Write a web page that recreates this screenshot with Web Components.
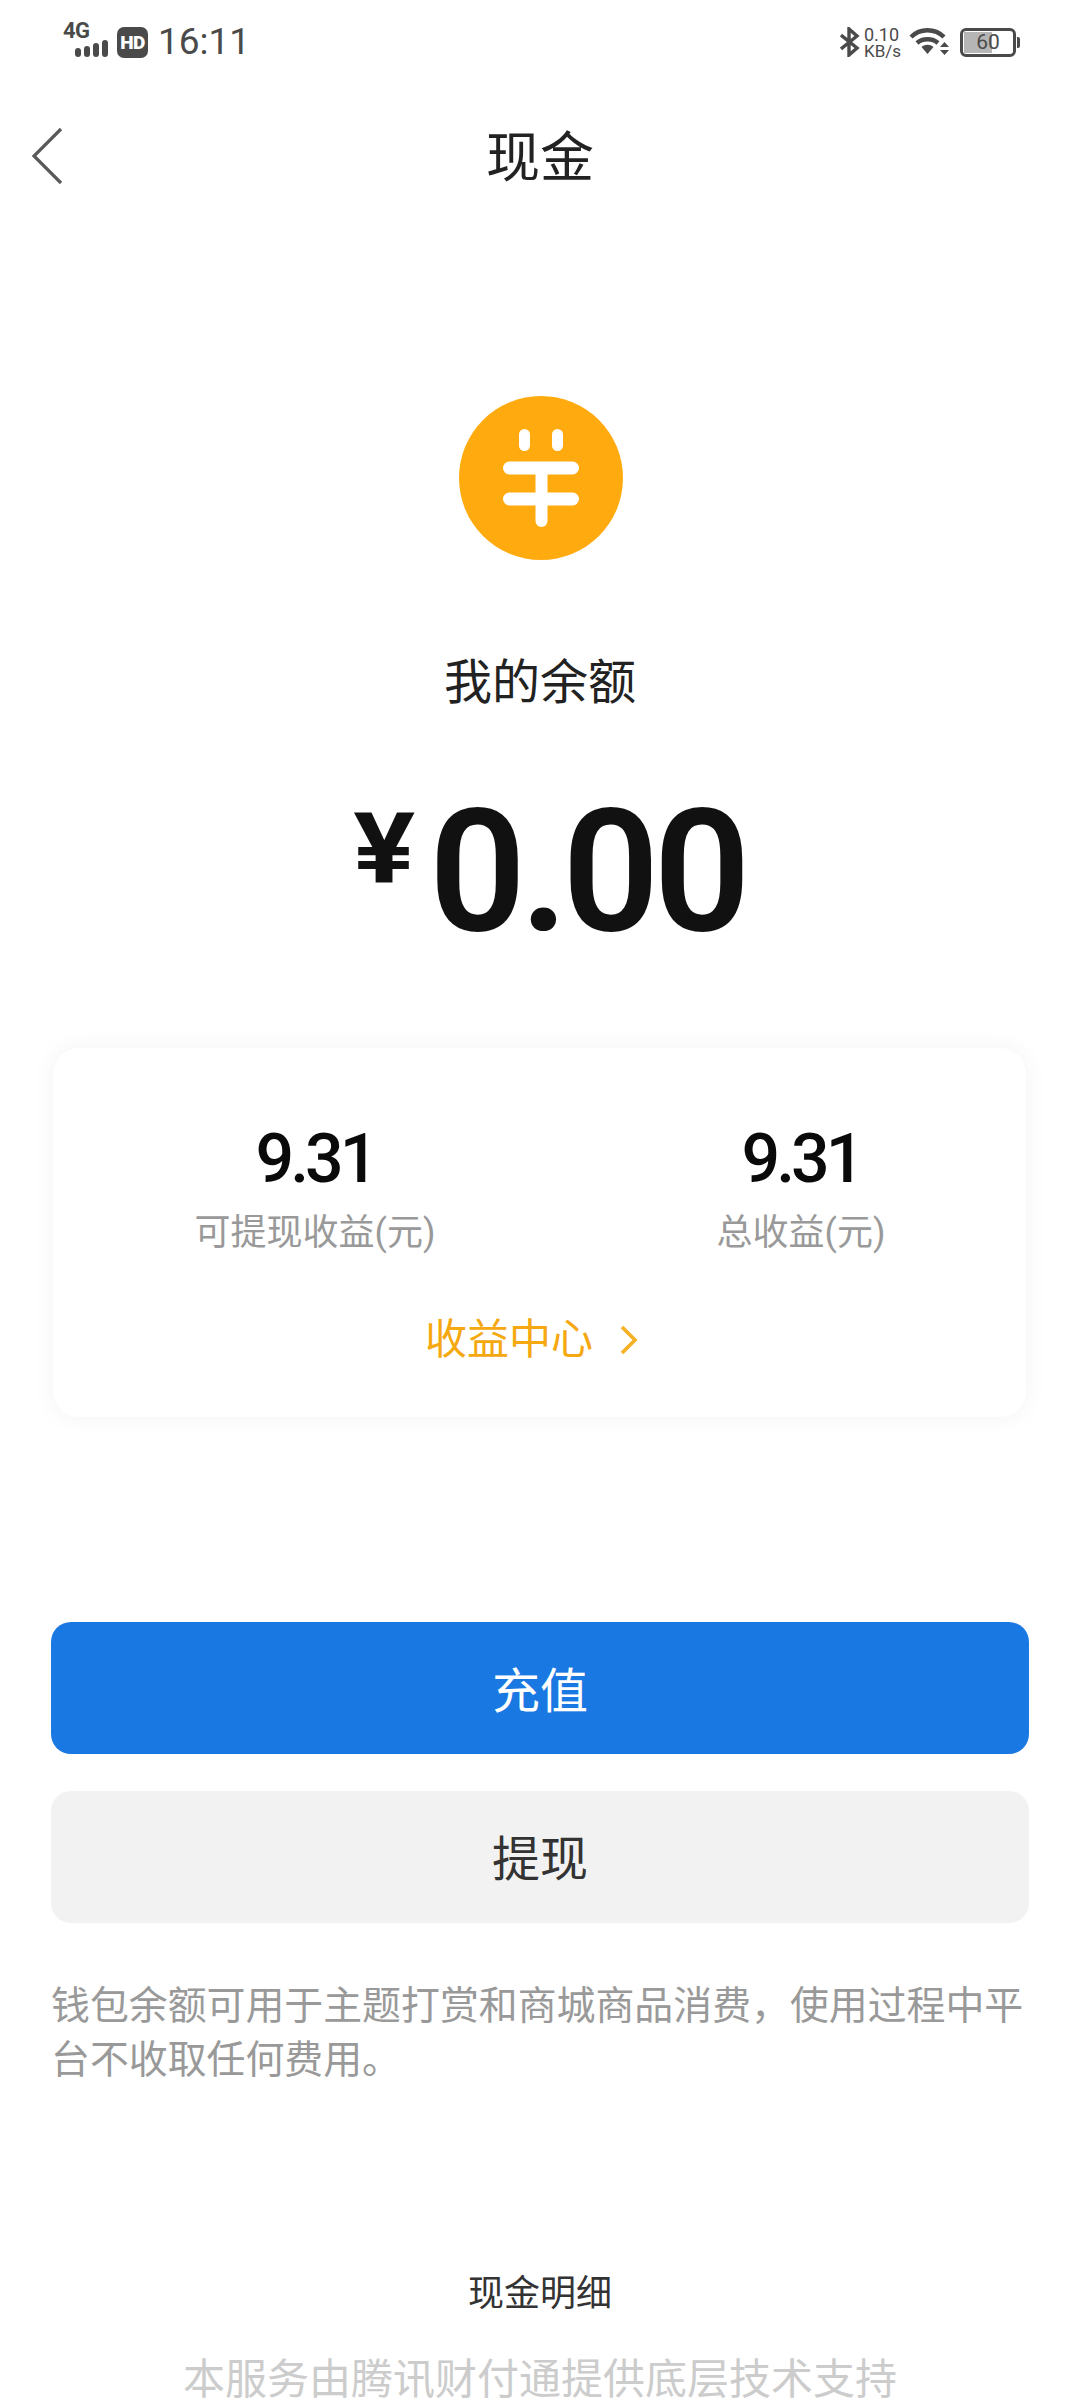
<!DOCTYPE html>
<html lang="zh">
<head>
<meta charset="utf-8">
<title>现金</title>
<style>
  html, body { margin: 0; background: #fff; }
  body {
    width: 1080px;
    height: 2400px;
    overflow: hidden;
    font-family: Roboto, "Noto Sans CJK SC", sans-serif;
  }
</style>
</head>
<body>
<status-bar></status-bar>
<nav-bar>现金</nav-bar>
<balance-head amount="0.00">我的余额</balance-head>
<earnings-card link="收益中心">
  <earn-stat value="9.31">可提现收益(元)</earn-stat>
  <earn-stat value="9.31">总收益(元)</earn-stat>
</earnings-card>
<action-button primary style="margin-top:205px">充值</action-button>
<action-button style="margin-top:37px;padding-bottom:5px">提现</action-button>
<wallet-note>钱包余额可用于主题打赏和商城商品消费，使用过程中平台不收取任何费用。</wallet-note>
<page-footer link="现金明细">本服务由腾讯财付通提供底层技术支持</page-footer>

<script>
class StatusBar extends HTMLElement {
  connectedCallback() {
    this.attachShadow({ mode: 'open' });
    this.shadowRoot.innerHTML = `
      <style>
        :host { display: flex; align-items: center; justify-content: space-between; height: 84px; padding: 0 60px 0 63px; color: #4a4a4a; }
        .side { display: flex; align-items: center; }
        .net { position: relative; width: 48px; height: 34px; }
        .net b { position: absolute; left: 0; top: -4px; font-size: 22px; line-height: 20px; font-weight: 700; letter-spacing: -0.5px; }
        .net svg { position: absolute; left: 11px; top: 14px; }
        .hd { width: 31px; height: 31px; margin-left: 6px; border-radius: 7px; background: #4a4a4a; color: #fff; font-size: 19px; font-weight: 900; line-height: 31px; text-align: center; letter-spacing: -0.5px; }
        .time { margin-left: 10px; font-size: 37px; line-height: 40px; }
        .speed { display: flex; flex-direction: column; align-items: flex-start; margin-left: 4px; width: 45px; padding-top: 2px; }
        .speed span { font-size: 18px; line-height: 16px; }
        .speed small { font-size: 17px; line-height: 16px; }
        .batt { position: relative; width: 56px; height: 29px; margin-left: 11px; box-sizing: border-box; border: 3px solid #4a4a4a; border-radius: 6px; font-size: 21px; line-height: 23px; text-align: center; }
        .batt i { position: absolute; left: 1px; top: 1px; bottom: 1px; width: 28px; background: #b5b5b5; }
        .batt span { position: relative; }
        .nub { width: 3px; height: 11px; margin-left: 1px; border-radius: 0 2px 2px 0; background: #4a4a4a; }
      </style>
      <div class="side">
        <div class="net"><b>4G</b>
          <svg width="36" height="18" viewBox="0 0 36 18" fill="#4a4a4a">
            <rect x="1" y="9" width="6" height="9" rx="3"/><rect x="10" y="7" width="6" height="11" rx="3"/><rect x="19" y="4" width="6" height="14" rx="3"/><rect x="28" y="1" width="6" height="17" rx="3"/>
          </svg>
        </div>
        <div class="hd">HD</div>
        <div class="time">16:11</div>
      </div>
      <div class="side">
        <svg width="20" height="30" viewBox="0 0 20 30" fill="none" stroke="#4a4a4a" stroke-width="3.4"><path d="M1 8 L17 21 L9 28 V2 L17 9 L1 22"/></svg>
        <div class="speed"><span>0.10</span><small>KB/s</small></div>
        <svg width="40" height="30" viewBox="0 0 40 30">
          <g fill="none" stroke="#4a4a4a" stroke-width="4.4">
            <path d="M2 10 C11 1 26 1 35 10"/>
            <path d="M8 16 C13.500 11 23.500 11 29 16"/>
          </g>
          <path d="M12.500 20 C16 17 21 17 24.500 20 L18.500 27 Z" fill="#4a4a4a"/>
          <path d="M35.500 15 L40 20 H31 Z M31 23 H40 L35.500 28 Z" fill="#4a4a4a"/>
        </svg>
        <div class="batt"><i></i><span>60</span></div>
        <div class="nub"></div>
      </div>
    `;
  }
}

class NavBar extends HTMLElement {
  connectedCallback() {
    this.attachShadow({ mode: 'open' });
    this.shadowRoot.innerHTML = `
      <style>
        :host { display: grid; grid-template-columns: 1fr auto 1fr; align-items: center; height: 150px; padding-left: 31px; padding-right: 31px; color: #222; }
        svg { margin-top: -6px; }
        .title { font-size: 54px; line-height: 60px; }
      </style>
      <svg width="32" height="60" viewBox="0 0 32 60" fill="none" stroke="#5a5a5a" stroke-width="3.2"><path d="M30 3 L3 30 L30 57"/></svg>
      <div class="title"><slot></slot></div>
    `;
  }
}

class BalanceHead extends HTMLElement {
  connectedCallback() {
    const amount = this.getAttribute('amount');
    this.attachShadow({ mode: 'open' });
    this.shadowRoot.innerHTML = `
      <style>
        :host { display: flex; flex-direction: column; align-items: center; padding-top: 162px; }
        svg { display: block; margin-left: 2px; }
        .label { margin-top: 93px; font-size: 48px; line-height: 60px; color: #222; }
        .amount { display: flex; align-items: flex-start; height: 170px; margin-top: 74px; margin-bottom: 91px; padding-left: 18px; color: #111; }
        .yen { font-size: 98px; line-height: 98px; font-weight: 700; margin-top: 14px; margin-right: 18px; transform: scaleX(1.18); transform-origin: center; margin-left: 5px; }
        .num { font-size: 170px; line-height: 170px; letter-spacing: -6px; font-weight: 600; }
      </style>
      <svg width="164" height="164" viewBox="0 0 164 164">
        <circle cx="82" cy="82" r="82" fill="#ffab0f"/>
        <g fill="#fff">
          <rect x="60" y="33" width="11" height="22" rx="5.500"/>
          <rect x="93" y="33" width="11" height="22" rx="5.500"/>
          <rect x="44" y="65.500" width="76" height="13" rx="6.500"/>
          <rect x="44" y="96.500" width="76" height="13" rx="6.500"/>
          <rect x="76.500" y="66" width="12" height="65" rx="6"/>
        </g>
      </svg>
      <div class="label"><slot></slot></div>
      <div class="amount"><span class="yen">¥</span><span class="num">${amount}</span></div>
    `;
  }
}

class EarnStat extends HTMLElement {
  connectedCallback() {
    const value = this.getAttribute('value');
    this.attachShadow({ mode: 'open' });
    this.shadowRoot.innerHTML = `
      <style>
        :host { display: flex; flex-direction: column; align-items: center; }
        .value { font-size: 68px; line-height: 76px; font-weight: 500; letter-spacing: -4px; color: #0a0a0a; }
        .label { margin-top: 14px; font-size: 36px; line-height: 44px; color: #999; }
      </style>
      <div class="value">${value}</div>
      <div class="label"><slot></slot></div>
    `;
  }
}

class EarningsCard extends HTMLElement {
  connectedCallback() {
    const link = this.getAttribute('link');
    this.attachShadow({ mode: 'open' });
    this.shadowRoot.innerHTML = `
      <style>
        :host { display: flex; flex-direction: column; box-sizing: border-box; width: 973px; height: 369px; margin-left: 53px; padding-top: 73px; border-radius: 26px; background: #fff; box-shadow: 0 0 24px rgba(0,0,0,0.05); }
        .stats { display: grid; grid-template-columns: 486px 486px; padding-left: 19px; justify-items: center; }
        .link { display: flex; align-items: center; justify-content: center; gap: 27px; margin-top: 60px; padding-right: 16px; font-size: 42px; line-height: 50px; color: #f5a80f; }
      </style>
      <div class="stats"><slot></slot></div>
      <div class="link"><span>${link}</span>
        <svg width="18" height="30" viewBox="0 0 18 30" fill="none" stroke="#f5b023" stroke-width="3.6"><path d="M2 2 L15 15 L2 28"/></svg>
      </div>
    `;
  }
}

class ActionButton extends HTMLElement {
  connectedCallback() {
    this.attachShadow({ mode: 'open' });
    this.shadowRoot.innerHTML = `
      <style>
        :host { display: flex; align-items: center; justify-content: center; width: 978px; height: 132px; margin-left: 51px; padding-bottom: 2px; box-sizing: border-box; border-radius: 20px; background: #f2f2f2; color: #333; font-size: 48px; }
        :host([primary]) { background: #1a78e3; color: #fff; }
      </style>
      <slot></slot>
    `;
  }
}

class WalletNote extends HTMLElement {
  connectedCallback() {
    this.attachShadow({ mode: 'open' });
    this.shadowRoot.innerHTML = `
      <style>
        :host { display: block; width: 980px; margin: 56px 0 0 51px; font-size: 38.9px; line-height: 54px; color: #999; }
      </style>
      <slot></slot>
    `;
  }
}

class PageFooter extends HTMLElement {
  connectedCallback() {
    const link = this.getAttribute('link');
    this.attachShadow({ mode: 'open' });
    this.shadowRoot.innerHTML = `
      <style>
        :host { display: flex; flex-direction: column; align-items: center; margin-top: 185px; }
        .link { font-size: 36px; line-height: 44px; color: #333; }
        .note { margin-top: 38px; font-size: 42px; line-height: 52px; color: #ccc; }
      </style>
      <div class="link">${link}</div>
      <div class="note"><slot></slot></div>
    `;
  }
}

customElements.define('status-bar', StatusBar);
customElements.define('nav-bar', NavBar);
customElements.define('balance-head', BalanceHead);
customElements.define('earn-stat', EarnStat);
customElements.define('earnings-card', EarningsCard);
customElements.define('action-button', ActionButton);
customElements.define('wallet-note', WalletNote);
customElements.define('page-footer', PageFooter);
</script>
</body>
</html>
